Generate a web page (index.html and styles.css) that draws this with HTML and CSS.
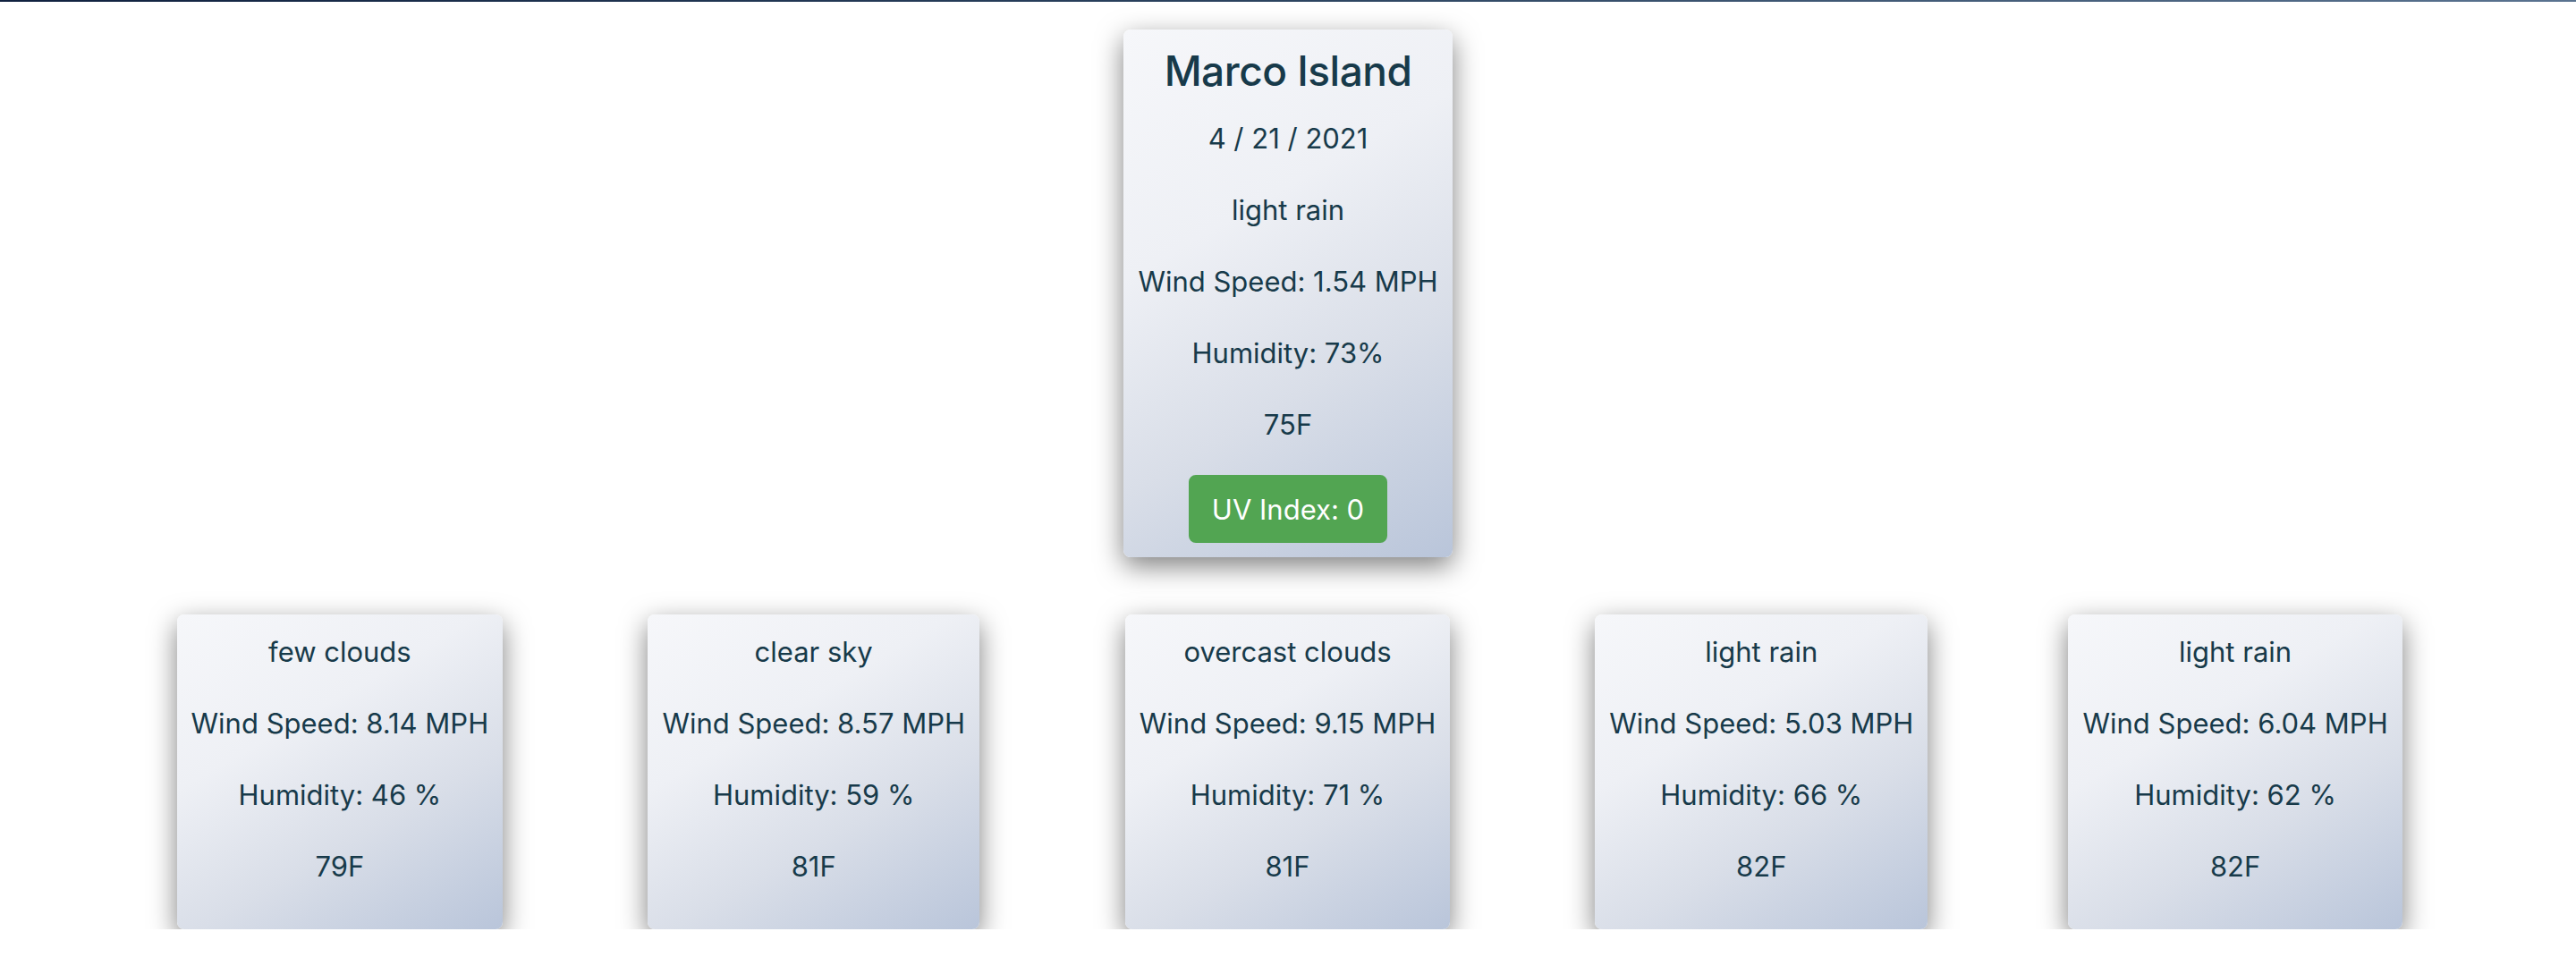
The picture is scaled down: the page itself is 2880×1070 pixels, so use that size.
FILE: index.html
```html
<!DOCTYPE html>
<html lang="en">
<head>
<meta charset="utf-8">
<title>Weather</title>
<link rel="stylesheet" href="styles.css">
</head>
<body>
<div class="topbar"></div>
<main class="page">
  <section class="current">
    <div class="card card-main">
      <h2 class="city">Marco Island</h2>
      <p>4 / 21 / 2021</p>
      <p>light rain</p>
      <p>Wind Speed: 1.54 MPH</p>
      <p>Humidity: 73%</p>
      <p>75F</p>
      <button class="uv">UV Index: 0</button>
    </div>
  </section>
  <section class="forecast">
    <div class="slot"><div class="card">
      <p>few clouds</p>
      <p>Wind Speed: 8.14 MPH</p>
      <p>Humidity: 46 %</p>
      <p>79F</p>
    </div></div>
    <div class="slot"><div class="card">
      <p>clear sky</p>
      <p>Wind Speed: 8.57 MPH</p>
      <p>Humidity: 59 %</p>
      <p>81F</p>
    </div></div>
    <div class="slot"><div class="card">
      <p>overcast clouds</p>
      <p>Wind Speed: 9.15 MPH</p>
      <p>Humidity: 71 %</p>
      <p>81F</p>
    </div></div>
    <div class="slot"><div class="card">
      <p>light rain</p>
      <p>Wind Speed: 5.03 MPH</p>
      <p>Humidity: 66 %</p>
      <p>82F</p>
    </div></div>
    <div class="slot"><div class="card">
      <p>light rain</p>
      <p>Wind Speed: 6.04 MPH</p>
      <p>Humidity: 62 %</p>
      <p>82F</p>
    </div></div>
  </section>
</main>
</body>
</html>
```
FILE: styles.css
```css
* { box-sizing: border-box; }
html, body {
  margin: 0;
  background: #ffffff;
}
body {
  font-family: Inter, "Noto Sans", "DejaVu Sans", sans-serif;
  font-size: 31px;
  line-height: 48px;
  color: #173a4a;
}
.topbar {
  height: 2px;
  background: linear-gradient(90deg, #10213f 0%, #2c4460 50%, #5a7390 100%);
}
.page {
  display: flex;
  flex-direction: column;
  align-items: stretch;
  padding-top: 31px;
}
.current {
  display: flex;
  justify-content: center;
}
.card {
  display: flex;
  flex-direction: column;
  align-items: center;
  text-align: center;
  padding: 18px 16px 14px;
  border-radius: 8px;
  background: linear-gradient(150deg, #f6f7fa 0%, #eef0f5 35%, #d9dee8 65%, #b9c5da 100%);
  box-shadow: 0 10px 30px rgba(0, 0, 0, 0.5);
}
.card p {
  margin: 0 0 32px;
  white-space: nowrap;
}
.city {
  margin: 0 0 22px;
  font-size: 46px;
  line-height: 57.6px;
  font-weight: 500;
  letter-spacing: -0.5px;
  color: #173a4a;
}
.uv {
  font-family: inherit;
  font-size: 31px;
  line-height: 48px;
  padding: 13px 24px 11px;
  border: 2px solid #52a552;
  border-radius: 8px;
  background: #52a552;
  color: #ffffff;
  white-space: nowrap;
  margin-bottom: 2px;
}
.forecast {
  display: grid;
  grid-template-columns: repeat(5, 1fr);
  justify-items: center;
  margin-top: 64px;
  padding: 0 116px 0 115px;
}
.slot {
  display: flex;
  justify-content: center;
}
```
